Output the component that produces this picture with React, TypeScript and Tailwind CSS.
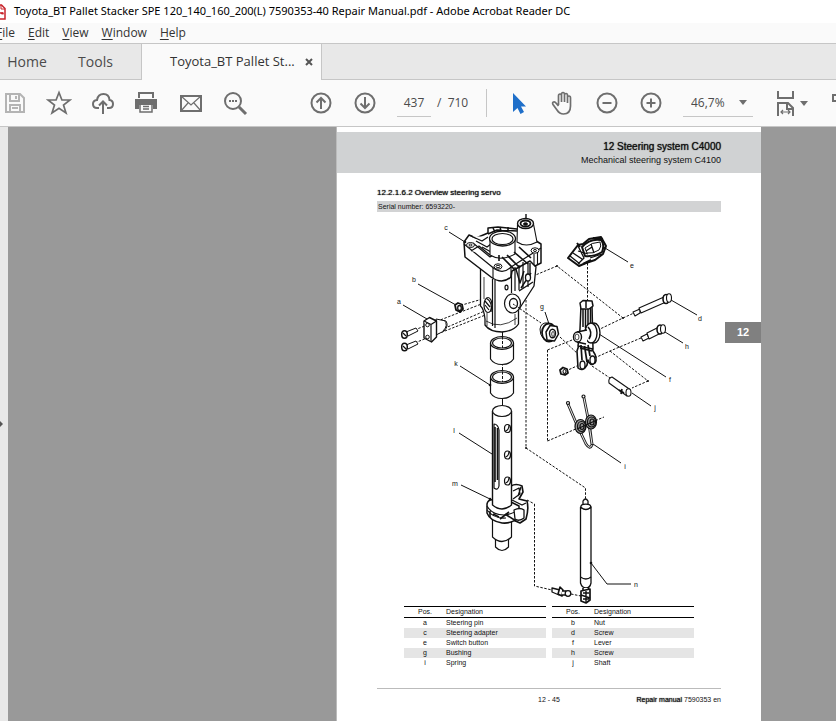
import { useState } from "react";

const menus = ["File", "Edit", "View", "Window", "Help"];

const leftRows = [
  ["a", "Steering pin"],
  ["c", "Steering adapter"],
  ["e", "Switch button"],
  ["g", "Bushing"],
  ["i", "Spring"],
];

const rightRows = [
  ["b", "Nut"],
  ["d", "Screw"],
  ["f", "Lever"],
  ["h", "Screw"],
  ["j", "Shaft"],
];

// letter, x, y of each callout
const callouts: [string, number, number][] = [
  ["c", 446, 229], ["b", 414, 281], ["a", 399, 303], ["g", 542, 308],
  ["e", 632, 267], ["d", 700, 320], ["h", 687, 348], ["f", 670, 381],
  ["j", 655, 409], ["i", 625, 468], ["k", 456, 365], ["l", 454, 432],
  ["m", 455, 485], ["n", 636, 586],
];

function ToolButton({ label, children }: { label: string; children: React.ReactNode }) {
  return (
    <button type="button" aria-label={label} className="flex h-9 w-11 shrink-0 items-center justify-center text-[#6e6e6e]">
      <svg width="26" height="26" viewBox="0 0 26 26" fill="none" stroke="currentColor" strokeWidth="2">
        {children}
      </svg>
    </button>
  );
}

function Caret() {
  return (
    <svg width="8" height="5" viewBox="0 0 8 5" className="pointer-events-none shrink-0">
      <path d="M0 0h8L4 5z" fill="#6e6e6e"/>
    </svg>
  );
}

function PartsTable({ rows }: { rows: string[][] }) {
  return (
    <table className="flex-1 border-collapse text-[7px] leading-[8px]">
      <thead>
        <tr className="border-y border-black">
          <th className="w-[42px] py-px font-normal">Pos.</th>
          <th className="py-px text-left font-normal">Designation</th>
        </tr>
      </thead>
      <tbody>
        {rows.map(([pos, name]) => (
          <tr key={pos} className="even:bg-[#e5e5e5]">
            <td className="py-px text-center">{pos}</td>
            <td className="py-px">{name}</td>
          </tr>
        ))}
      </tbody>
    </table>
  );
}

function Diagram() {
  return (
    <svg viewBox="337 211 424 394" className="block w-full" fill="none" stroke="#111" strokeWidth="1" strokeLinejoin="round" strokeLinecap="butt">
      {/* assembly axes */}
      <g strokeDasharray="2.5 1.5" strokeWidth="1">
        <path d="M526 283V447L585.5 487V498"/>
        <path d="M502.500 330V411"/>
        <path d="M587.500 262V300"/>
        <path d="M547.500 349V440"/>
        <path d="M534.500 503V585L552 589"/>
        <path d="M527 499L534.500 503M571 593L581 595"/>
        <path d="M507 286L557 265L623 317L600 328M623 317L634 312"/>
        <path d="M513 303L541 322M560 336L580 355M592 365L610 377"/>
        <path d="M547.500 349L577 337M547.500 440L604 416"/>
        <path d="M641 337L610 350L568 369M610 350L648 380L632 387"/>
        <path d="M486 297L462 304M484 302L417 328M487 309L436 331M488 313L417 341"/>
        <path d="M507 286L486 296"/>
      </g>

      {/* steering adapter */}
      <g fill="#fff">
        <path d="M480.500 266V305Q484 308 485 318V324Q490 331 502 331Q514 330 518.500 323V309L534 285L536 266L528 256L500 272Z" strokeWidth="1.3"/>
        <path d="M464 241L469 234L476 237L488 232V227L498 226L517 228L533 238L541 243V262L535 265L530 260L512 270L511 276Q502 284 491 276L465 256Z" strokeWidth="1.5"/>
        <path d="M464 243L491 265Q502 275 511 266L541 247" strokeWidth="1.2"/>
        <path d="M473 242L490 256L499 251M471 250L479 245L490 254" strokeWidth="1.2"/>
        <path d="M471 235L482 240L488 236M476 240L487 246L491 243M482 246L491 251" strokeWidth="1.3"/>
        <path d="M488 233L497 229L517 230M493 227L495 231M500 226L501 230M508 226V230" strokeWidth="1.5"/>
        <path d="M490 238V254Q501 261 515 253V238" strokeWidth="1.1"/>
        <ellipse cx="502.500" cy="237.500" rx="13" ry="7.500" strokeWidth="1.3"/>
        <ellipse cx="502.500" cy="238" rx="10.500" ry="5.500" strokeWidth="1.1"/>
        <path d="M517.500 223L517 241Q526 247 537 241L533.500 223" strokeWidth="1.1"/>
        <ellipse cx="525.500" cy="222.500" rx="8" ry="5" strokeWidth="1.4"/>
        <ellipse cx="525.500" cy="222.500" rx="5" ry="3" strokeWidth="1.8"/>
        <ellipse cx="525.500" cy="223" rx="2" ry="1.200" fill="#111"/>
        <ellipse cx="470.500" cy="244" rx="4" ry="2.500"/>
        <ellipse cx="470.500" cy="244" rx="1.500" ry="1"/>
        <ellipse cx="498" cy="265.500" rx="4" ry="2.700"/>
        <ellipse cx="498" cy="265.500" rx="2" ry="1.200"/>
        <ellipse cx="535" cy="249.500" rx="4" ry="2.700"/>
        <ellipse cx="535" cy="249.500" rx="1.500" ry="1"/>
      </g>
      <path d="M502 256L515 269M507 254L520 267M514 251L528 263M519 246L531 257M499 254V260" strokeWidth="1.6"/>
      <path d="M534 253V264M537.500 251V263M511 266V276M493 267V277" strokeWidth="1.1"/>
      <path d="M492.500 278V325M495 279V327M511.500 270V292M515 266V290M519 264V289M523 261V287M528 262V286" strokeWidth="1.2"/>
      <path d="M516 268L520 282L524 270M521 287L531 272M519 290L533 281M530 262V276" strokeWidth="1.4"/>
      <path d="M484 276V298M487 312V325M515 313V324M486 320Q500 329 517 317" strokeWidth="0.8"/>
      <ellipse cx="506.500" cy="286.500" rx="1.500" ry="2.300" strokeWidth="1.200"/>
      <ellipse cx="528" cy="276.500" rx="2.500" ry="3.500" fill="#fff" strokeWidth="1.300"/>
      <ellipse cx="488" cy="304" rx="4" ry="7.500" fill="#fff" strokeWidth="1.200"/>
      <path d="M486 297Q493 301 491 311M485 300L490 306M485 304L489 309" strokeWidth="1.200"/>
      <ellipse cx="512.500" cy="302.500" rx="8" ry="9.500" fill="#fff" strokeWidth="1.200"/>
      <ellipse cx="513.500" cy="302.500" rx="4" ry="5" fill="#fff" strokeWidth="1.300"/>
      <path d="M513 303L521 308" strokeDasharray="2 1"/>
      <path d="M526 213V217" strokeWidth="1.400"/>

      {/* pin, nut and screws */}
      <g fill="#fff">
        <path d="M436 318L446 320Q449 325 444 330L436 334Z"/>
        <path d="M444 319Q449 324 443 330"/>
        <path d="M424 320L429.500 316.500L436.500 320V336L431.500 341L424 337Z" strokeWidth="1.400"/>
        <path d="M424 320L431 323.500V341M431 323.500L436.500 320" strokeWidth="1.200"/>
        <circle cx="427.500" cy="324" r="1.800"/>
        <circle cx="427.500" cy="336" r="1.800"/>
        <path d="M406 331L416 327L418 330L408 335Z"/>
        <ellipse cx="404.500" cy="333.500" rx="2.800" ry="3.800" strokeWidth="1.500"/>
        <path d="M406 344L416 340L418 343L408 348Z"/>
        <ellipse cx="404.500" cy="346" rx="2.800" ry="3.800" strokeWidth="1.500"/>
        <path d="M455 304L458 302L462 303.500L463 308L460 311L456 309Z" strokeWidth="1.800"/>
        <ellipse cx="459.500" cy="307" rx="1.800" ry="2.500" strokeWidth="1.300"/>
      </g>
      <path d="M403 332L406 335M403 345L406 348" strokeWidth="1.200"/>

      {/* bushing */}
      <g fill="#fff">
        <path d="M548 322Q541 321 540 328Q540 334 543 337L550 340Z"/>
        <ellipse cx="549" cy="331.500" rx="7" ry="9" strokeWidth="1.800"/>
        <path d="M546 331L550 324.500L557 325.500L558.500 333L554.500 340L547 339Z" strokeWidth="1.500"/>
        <ellipse cx="552.500" cy="332.500" rx="3" ry="4.300" strokeWidth="1.400"/>
        <ellipse cx="553" cy="333" rx="1.300" ry="2.500" strokeWidth="0.800"/>
      </g>

      {/* sleeves */}
      <g fill="#fff" strokeWidth="1.200">
        <path d="M490.500 342V358Q494 363.500 502 363.500T513.500 358V342"/>
        <ellipse cx="502" cy="342" rx="11.500" ry="6.500"/>
        <ellipse cx="502" cy="342" rx="9.500" ry="5"/>
        <path d="M490.500 376V392Q494 397.500 502 397.500T513.500 392V376"/>
        <ellipse cx="502" cy="376" rx="11.500" ry="6.500"/>
        <ellipse cx="502" cy="376" rx="9.500" ry="5"/>
      </g>
      <path d="M502.500 331V347M502.500 366V381M502.500 400V411" strokeDasharray="3 1.500"/>

      {/* tube and clamp */}
      <g fill="#fff" strokeWidth="1.200">
        <path d="M495.500 535V546Q502 553 508.500 546V535"/>
        <path d="M492.500 515V536Q502 545 511.500 536V515"/>
        <path d="M511 485Q516 482 522 485L523 491L519 498L527 500Q529 508 526 518L520 522L511 518Z" strokeWidth="1.600"/>
        <path d="M513 490L519 487L520 493L513 498M521 486L518 495" strokeWidth="1.300"/>
        <path d="M487 503Q488 498 494 499L511 501L519 505V516Q512 523 502 522Q490 520 487 512Z" strokeWidth="1.500"/>
        <path d="M487 505Q492 514 504 514Q514 513 518 508M487 509Q494 518 506 517" strokeWidth="1.200"/>
        <path d="M490 510V516M493 513L499 516M505 513L516 520M500 518L509 511" strokeWidth="1.600"/>
        <path d="M512 499L522 504L526 502M514 509Q520 506 524 509V517Q519 521 515 518Z" strokeWidth="1.300"/>
        <path d="M492.500 410V504Q502 512 511.500 504V410Z" stroke="none"/>
        <path d="M492.500 410V504Q502 512 511.500 504V410" strokeWidth="1.400"/>
        <ellipse cx="502" cy="410" rx="9.500" ry="5.500"/>
        <path d="M494 423Q498 423 499 429V485Q498 490 494 487Z"/>
        <path d="M495 426V481M497.500 427V479" strokeWidth="1.600"/>
        <ellipse cx="507.500" cy="427.500" rx="3" ry="4"/>
        <ellipse cx="507.500" cy="454" rx="3" ry="4"/>
        <ellipse cx="507.500" cy="480" rx="3" ry="4"/>
        <path d="M505.500 430Q509 429 509 424M505.500 456Q509 455 509 450M505.500 482Q509 481 509 476"/>
      </g>

      {/* switch button */}
      <g strokeWidth="1.500">
        <path d="M568 257L578 244L583 243L589 238L601 236L606 245L603 253L595 259L586 262L579 265Z" fill="#fff" strokeWidth="2"/>
        <path d="M582 246Q590 237 601 239Q605 243 602 251Q594 256 585 255Z" strokeWidth="2"/>
        <path d="M585 247Q592 241 600 241Q602 245 599 249Q593 253 587 252Z" strokeWidth="1"/>
        <path d="M591 243L594 252M578 245L584 257L578 263M570 255L580 263M573 252L582 258M586 250L592 246M578 250L588 253M590 257L602 253" strokeWidth="1.300"/>
        <path d="M577 242L580 246M593 237L603 238M583 263L591 259" strokeWidth="2"/>
      </g>

      {/* lever */}
      <g fill="#fff" strokeWidth="1.300">
        <path d="M577 350L578 367Q583 371 587 364L588 359Q590 366 595 362Q598 357 593 350L591 344H579Z" strokeWidth="1.600"/>
        <path d="M581 304L580 328L578 345L593 348L592 304Z" strokeWidth="1.500"/>
        <path d="M580 302L583 299.500L592 300L593 305L589 308H581Z" strokeWidth="1.500"/>
        <path d="M583 308V326M585.500 308V327M588 308V324M590.500 307V322M586 300V307" strokeWidth="1.500"/>
        <ellipse cx="594" cy="332" rx="6" ry="10"/>
        <ellipse cx="591" cy="332" rx="6" ry="10" strokeWidth="1.400"/>
        <path d="M578 331L587 329V341L578 341Z" stroke="none"/>
        <path d="M577 331L587 329M577 341L586 343"/>
        <ellipse cx="577.500" cy="336" rx="4" ry="5" strokeWidth="1.400"/>
        <ellipse cx="577" cy="336" rx="2" ry="3" strokeWidth="0.800"/>
        <ellipse cx="582.500" cy="364" rx="2.500" ry="4"/>
        <ellipse cx="592.500" cy="359" rx="2.500" ry="4"/>
        <path d="M581 344L582 359M584.500 345L587 361M588 344L590 355M580 347L592 350M588 326Q593 331 589 338" strokeWidth="1.700"/>
      </g>

      {/* screws d and h, nut, shaft */}
      <g fill="#fff" strokeWidth="1.100">
        <path d="M633 311L640 308V312L635 315Z"/>
        <path d="M639 307L664 296L666 301L641 312Z"/>
        <ellipse cx="666" cy="298" rx="3" ry="4.500" strokeWidth="1.600"/>
        <ellipse cx="669" cy="297" rx="2.500" ry="4.200"/>
        <path d="M641 336L647 333L649 337L643 340Z"/>
        <path d="M647 332L659 326L661 332L649 338Z"/>
        <ellipse cx="660" cy="328.500" rx="3" ry="4.500" strokeWidth="1.600"/>
        <ellipse cx="663" cy="328" rx="2.500" ry="4.200"/>
        <path d="M560 369L563 366.500L567 368L568 372L565 374L561 373Z" strokeWidth="1.800"/>
        <ellipse cx="564.500" cy="370.500" rx="1.500" ry="2"/>
        <path d="M612 376L630 388.500L627 395L609 382Q608 377 612 376Z"/>
        <ellipse cx="628.500" cy="391.500" rx="2.500" ry="3.800"/>
        <path d="M619 389L624 392M622 388L621 393" strokeWidth="1.700"/>
      </g>

      {/* spring */}
      <path d="M568 403L577 424L586 443Q590 449 592 444L590 428M584 397L588 417L592 443" stroke="#222" strokeWidth="2.800"/>
      <path d="M568 403L577 424L586 443Q590 449 592 444M584 397L588 417L592 443" stroke="#fff" strokeWidth="0.900"/>
      <g strokeWidth="1.200">
        <circle cx="568" cy="402" r="1.500"/>
        <circle cx="583.500" cy="395.500" r="1.500"/>
        <ellipse cx="580.500" cy="425.500" rx="5.500" ry="7" fill="#999"/>
        <ellipse cx="581.500" cy="425.500" rx="4" ry="5"/>
        <ellipse cx="582" cy="425.500" rx="2" ry="3"/>
        <ellipse cx="591" cy="421" rx="5.500" ry="7" fill="#999"/>
        <ellipse cx="591.500" cy="421" rx="4" ry="5"/>
        <ellipse cx="592" cy="421" rx="2" ry="3"/>
        <path d="M577 428L597 419" strokeWidth="1.300"/>
      </g>

      {/* gas spring and its ball stud */}
      <g fill="#fff" strokeWidth="1.300">
        <path d="M583 506V500Q585.500 496 588 500V506"/>
        <ellipse cx="585.800" cy="506" rx="5" ry="2.800"/>
        <path d="M580.500 506V582Q582 587 586 587T591 582V506Q586 511 580.500 506"/>
        <path d="M580.500 576Q586 580 591 576"/>
        <path d="M583 587V591H588.500V587" strokeWidth="1.600"/>
        <path d="M581 590L590 588V599L586 602L581 600Z" strokeWidth="1.700"/>
        <path d="M581 594L590 597M586 590V601M583 592H589M583 598H589" strokeWidth="1.400"/>
        <path d="M552 587L560 589L559 594L552 591Z"/>
        <path d="M560 586L563 589L562 595L558 593Z" strokeWidth="1.600"/>
        <path d="M562 590H566V594H562"/>
        <circle cx="568" cy="592.500" r="2.800"/>
      </g>

      {/* leader lines */}
      <g strokeWidth="1">
        <path d="M449 231L465 241M418 283L456 304M403 304L427 318M545 311L549 323"/>
        <path d="M605 247L628 261M671 299L697 314M665 331L683 342M599 333L666 376"/>
        <path d="M632 392L651 405M593 443L621 462M460 365L490 384M459 432L492 453M461 484L490 498"/>
        <path d="M591 562L607 583H631"/>
      </g>
      <g fill="#111" stroke="none">
        <circle cx="465" cy="241" r="1.300"/>
        <circle cx="490" cy="384" r="1.300"/>
        <circle cx="490" cy="498" r="1.300"/>
        <circle cx="591" cy="562" r="1.300"/>
        <circle cx="605" cy="247" r="1.300"/>
        <circle cx="557" cy="265" r="1"/>
        <circle cx="623" cy="317" r="1"/>
        <circle cx="648" cy="380" r="1"/>
        <circle cx="526" cy="447" r="1"/>
      </g>
      <g fill="#111" stroke="none" fontSize="7" textAnchor="middle">
        {callouts.map(([letter, x, y]) => <text key={letter} x={x} y={y}>{letter}</text>)}
      </g>
    </svg>
  );
}

export default function App() {
  const [page, setPage] = useState("437");

  return (
    <div className="flex h-screen min-h-[600px] flex-col overflow-hidden bg-[#fafafa] font-['Open_Sans','Noto_Sans',sans-serif] text-[#4b4b4b]">
      {/* Title bar */}
      <header className="flex h-[23px] shrink-0 items-center gap-2 bg-white text-[11px] text-black">
        <svg width="14" height="16" viewBox="0 0 14 16" className="-ml-2 shrink-0" fill="none" stroke="#c8252c">
          <path d="M1 1H9.500L13 4.500V15H1Z" strokeWidth="1.500"/>
          <path d="M9 1V5H13" />
          <path d="M4 11Q8 8 7 5Q6 3 6 6Q8 10 11 10Q12 8 8 9Q3 10 4 12" strokeWidth="1.200"/>
        </svg>
        <h1 className="whitespace-nowrap font-['Noto_Sans',sans-serif]">Toyota_BT Pallet Stacker SPE 120_140_160_200(L) 7590353-40 Repair Manual.pdf - Adobe Acrobat Reader DC</h1>
      </header>

      {/* Menu */}
      <nav className="-ml-1 flex h-5 shrink-0 items-center gap-[13px] text-xs text-[#333]">
        {menus.map(m => (
          <button key={m} type="button"><span className="underline underline-offset-2">{m.charAt(0)}</span>{m.slice(1)}</button>
        ))}
      </nav>

      {/* Tabs */}
      <div className="flex h-[37px] shrink-0 border-y border-[#c6c6c6] bg-[#e8e8e8]">
        <button type="button" className="w-[60px] pr-1.5 text-sm">Home</button>
        <button type="button" className="w-[81px] pr-2.5 text-sm">Tools</button>
        <div className="-mb-px flex w-[181px] items-center justify-between border-x border-[#c6c6c6] bg-[#fafafa] pr-2 pl-7 text-[#333]">
          <button type="button" className="text-[13px] whitespace-nowrap">Toyota_BT Pallet St...</button>
          <button type="button" aria-label="Close tab">
            <svg width="8" height="8" viewBox="0 0 8 8" stroke="#555" strokeWidth="2"><path d="M1 1L7 7M7 1L1 7"/></svg>
          </button>
        </div>
      </div>

      {/* Toolbar */}
      <div className="flex h-[47px] shrink-0 items-center border-b border-[#c6c6c6] text-xs">
        <div className="-ml-[7px] flex">
          <ToolButton label="Save">
            <g stroke="#b4b4b4"><path d="M4 4H18L22 8V22H4Z"/><path d="M8 4V11H17V4M8 22V15H18V22M10 18H16M14 6V9"/></g>
          </ToolButton>
          <ToolButton label="Star">
            <path d="M13 2.500L15.900 10H24L17.500 15L20 23L13 18.300L6 23L8.500 15L2 10H10.100Z" strokeWidth="1.700"/>
          </ToolButton>
          <ToolButton label="Upload">
            <path d="M9 18H7Q3 18 3 14Q3 10.500 7 10Q8 4 13.500 4Q19 4 19.500 10Q23 10.500 23 14Q23 18 19 18H17"/>
            <path d="M13 24V12M9 15.500L13 11.500L17 15.500"/>
          </ToolButton>
          <ToolButton label="Print">
            <path d="M5 8V3H19V8" />
            <path d="M1 9H23V19H19V15H5V19H1Z" fill="currentColor" stroke="none"/>
            <path d="M6 14V22H18V14M9 16.500H15M9 19H15" strokeWidth="1.500"/>
          </ToolButton>
          <ToolButton label="Mail">
            <path d="M3 6H23V21H3Z"/><path d="M3 6L13 15L23 6M3 21L10 13M23 21L16 13" strokeWidth="1.200"/>
          </ToolButton>
          <ToolButton label="Find">
            <circle cx="11" cy="11" r="8"/><path d="M17 17L24 24" strokeWidth="3"/>
            <path d="M7 11H9M10 11H12M13 11H15"/>
          </ToolButton>
        </div>

        <div className="ml-[42px] flex">
          <ToolButton label="Previous page">
            <circle cx="13" cy="13" r="9.500"/><path d="M13 19V8M8.500 12.500L13 8L17.500 12.500"/>
          </ToolButton>
          <ToolButton label="Next page">
            <circle cx="13" cy="13" r="9.500"/><path d="M13 7V18M8.500 13.500L13 18L17.500 13.500"/>
          </ToolButton>
        </div>

        <input aria-label="Page number" value={page} onChange={e => setPage(e.target.value)}
          className="ml-2.5 h-7 w-[34px] shrink-0 border-b border-[#c6c6c6] text-center outline-none"/>
        <span className="ml-1.5 w-[49px] shrink-0 whitespace-pre">/  710</span>
        <div className="h-7 w-px shrink-0 bg-[#c6c6c6]"/>

        <div className="ml-2.5 flex">
          <ToolButton label="Select">
            <path d="M7 3V22L11.500 18L14.500 24L18 22L15 16.500H20Z" fill="#1f6fc9" stroke="none"/>
          </ToolButton>
          <ToolButton label="Hand">
            <path d="M8.500 15V6Q8.500 4 10 4T11.500 6V12M11.500 6V4.500Q11.500 2.500 13 2.500T14.500 4.500V12M14.500 5Q14.500 3.500 16 3.500T17.500 5.500V13M17.500 7.500Q17.500 6 19 6T20.500 8V16Q20.500 24 13.500 24Q9.500 24 7 20L3 14.500Q2 12.500 3.500 12Q5 11.500 6 13L8.500 16" strokeWidth="1.700"/>
          </ToolButton>
          <ToolButton label="Zoom out">
            <circle cx="13" cy="13" r="9.500"/><path d="M8.500 13H17.500"/>
          </ToolButton>
          <ToolButton label="Zoom in">
            <circle cx="13" cy="13" r="9.500"/><path d="M8.500 13H17.500M13 8.500V17.500"/>
          </ToolButton>
        </div>

        <label className="ml-2.5 flex h-7 w-[70px] shrink-0 items-center border-b border-[#c6c6c6] pr-1.5">
          <select aria-label="Zoom level" className="h-full min-w-0 flex-1 appearance-none bg-transparent pl-2 outline-none">
            <option>46,7%</option>
            <option>100%</option>
          </select>
          <Caret/>
        </label>
        <button type="button" aria-label="Fit width" className="ml-6 flex shrink-0 items-center gap-1.5 text-[#6e6e6e]">
          <svg width="17" height="25" viewBox="0 0 17 25" fill="none" stroke="currentColor" strokeWidth="2">
            <path d="M1 0V7H16V0M1 25V12H11L16 17V25M10 12V18H16"/>
            <path d="M4 21H13M6 19L4 21L6 23M11 19L13 21L11 23" strokeWidth="1.200"/>
          </svg>
          <Caret/>
        </button>
        <button type="button" aria-label="Comment" className="ml-6 shrink-0 pb-2.5 text-[#6e6e6e]">
          <svg width="20" height="10" viewBox="0 0 20 10" fill="none" stroke="currentColor" strokeWidth="2"><path d="M1 2H19V8H1Z M4 5H8"/></svg>
        </button>
      </div>

      {/* Document viewer */}
      <div className="flex min-h-0 flex-1">
        <button type="button" aria-label="Show navigation pane" className="flex w-2 shrink-0 items-center overflow-hidden bg-[#e8e8e8]">
          <svg width="3" height="6" viewBox="0 0 3 6"><path d="M0 0L3 3L0 6Z" fill="#555"/></svg>
        </button>
        <main className="grid flex-1 grid-cols-[328fr_425fr_75fr] overflow-hidden bg-[#999]">
          <article className="relative col-start-2 border-l border-[#bbb] bg-white pt-[5px] font-['Liberation_Sans',Arial,sans-serif] text-[#111]">
            <div className="bg-[#d0d2d3] pt-2 pr-10 pb-1.5 text-right">
              <p className="text-[10px] leading-[14px] [text-shadow:0_0_1px_currentColor]">12 Steering system C4000</p>
              <p className="text-[9px] leading-[13px]">Mechanical steering system C4100</p>
            </div>
            <div className="px-10">
              <h2 className="pt-[15px] text-[8px] leading-[10px] [text-shadow:0_0_1px_currentColor]">12.2.1.6.2 Overview steering servo</h2>
              <p className="mt-[3px] bg-[#d2d3d4] px-px text-[7px] leading-[11px]">Serial number: 6593220-</p>
            </div>
            <Diagram/>
            <div className="flex gap-1.5 pr-[67px] pl-[67px]">
              <PartsTable rows={leftRows}/>
              <PartsTable rows={rightRows}/>
            </div>
            <footer className="mx-10 mt-5 grid grid-cols-3 border-t border-[#bbb] pt-[7px] text-[7px] leading-[8px]">
              <span className="col-start-2 text-center">12 - 45</span>
              <span className="text-right whitespace-nowrap"><span className="[text-shadow:0_0_1px_currentColor]">Repair manual</span> 7590353 en</span>
            </footer>
            <div className="absolute top-[195px] right-0 flex h-[21px] w-9 items-center justify-center bg-[#808080] text-[11px] font-bold text-white">12</div>
          </article>
        </main>
      </div>
    </div>
  );
}
